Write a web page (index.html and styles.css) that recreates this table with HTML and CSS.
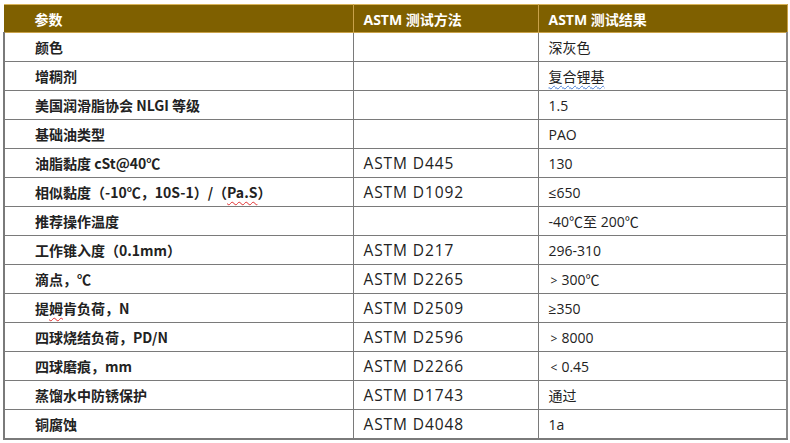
FILE: index.html
```html
<!DOCTYPE html>
<html lang="zh">
<head>
<meta charset="utf-8">
<link rel="stylesheet" href="styles.css">
</head>
<body>
<table class="spec">
  <colgroup><col class="c1"><col class="c2"><col class="c3"></colgroup>
  <thead>
    <tr><th>参数</th><th>ASTM 测试方法</th><th>ASTM 测试结果</th></tr>
  </thead>
  <tbody>
    <tr><td class="name">颜色</td><td class="method"></td><td>深灰色</td></tr>
    <tr><td class="name">增稠剂</td><td class="method"></td><td><span class="wavy-blue">复合锂基</span></td></tr>
    <tr><td class="name">美国润滑脂协会 NLGI 等级</td><td class="method"></td><td>1.5</td></tr>
    <tr><td class="name">基础油类型</td><td class="method"></td><td>PAO</td></tr>
    <tr><td class="name">油脂黏度 cSt@40℃</td><td class="method">ASTM D445</td><td>130</td></tr>
    <tr><td class="name">相似黏度（-10℃，10S-1）/（<span class="wavy-red">Pa.S</span>）</td><td class="method">ASTM D1092</td><td>≤650</td></tr>
    <tr><td class="name">推荐操作温度</td><td class="method"></td><td>-40℃至 200℃</td></tr>
    <tr><td class="name">工作锥入度（0.1mm）</td><td class="method">ASTM D217</td><td>296-310</td></tr>
    <tr><td class="name">滴点，℃</td><td class="method">ASTM D2265</td><td><span class="cmp">&gt;</span>300℃</td></tr>
    <tr><td class="name">提<span class="wavy-red">姆</span>肯负荷，N</td><td class="method">ASTM D2509</td><td>≥350</td></tr>
    <tr><td class="name">四球烧结负荷，PD/N</td><td class="method">ASTM D2596</td><td><span class="cmp">&gt;</span>8000</td></tr>
    <tr><td class="name">四球磨痕，mm</td><td class="method">ASTM D2266</td><td><span class="cmp">&lt;</span>0.45</td></tr>
    <tr><td class="name">蒸馏水中防锈保护</td><td class="method">ASTM D1743</td><td>通过</td></tr>
    <tr><td class="name">铜腐蚀</td><td class="method">ASTM D4048</td><td>1a</td></tr>
  </tbody>
</table>
</body>
</html>
```
FILE: styles.css
```css
html, body {
  margin: 0;
  padding: 0;
  background: #ffffff;
}
body {
  padding: 4px 0 0 3px;
  font-family: "Open Sans", "Noto Sans CJK SC", sans-serif;
  color: #222;
}
.spec {
  border-collapse: collapse;
  table-layout: fixed;
  width: 783px;
}
.c1 { width: 349px; }
.c2 { width: 185px; }
.c3 { width: 249px; }

.spec th {
  background: #7f6000;
  color: #ffffff;
  font-weight: 700;
  font-size: 14px;
  text-align: left;
  height: 27px;
  padding: 0 0 0 10px;
  border-top: 1px solid #d9b45a;
  border-left: 1px solid #c9a24a;
  border-right: 1px solid #c9a24a;
  border-bottom: 1px solid #c9a24a;
}
.spec th:first-child {
  padding-left: 30px;
  border-left-color: #7f6000;
}
.spec td {
  height: 28px;
  padding: 0 0 0 10px;
  font-size: 14px;
  border: 1px solid #7a7a7a;
  white-space: nowrap;
}
.spec td.name {
  padding-left: 30px;
  font-weight: 700;
  font-family: "Noto Sans CJK SC", "Open Sans", sans-serif;
}
.spec td.method {
  font-size: 15.5px;
  letter-spacing: 0.9px;
}
.spec tbody td:first-child {
  border-left: 2px solid #7a7a7a;
}
.spec tbody td:last-child {
  border-right: 2px solid #8a8a8a;
}
.spec tbody tr:last-child td {
  border-bottom: 2px solid #7a7a7a;
}
.cmp {
  display: inline-block;
  font-size: 12px;
  margin: 0 4px 0 2px;
}
.wavy-blue {
  text-decoration: underline wavy #4a7fd6;
  text-decoration-thickness: 1px;
  text-underline-offset: 3px;
}
.wavy-red {
  text-decoration: underline wavy #e03030;
  text-decoration-thickness: 1px;
  text-underline-offset: 3px;
}
```
